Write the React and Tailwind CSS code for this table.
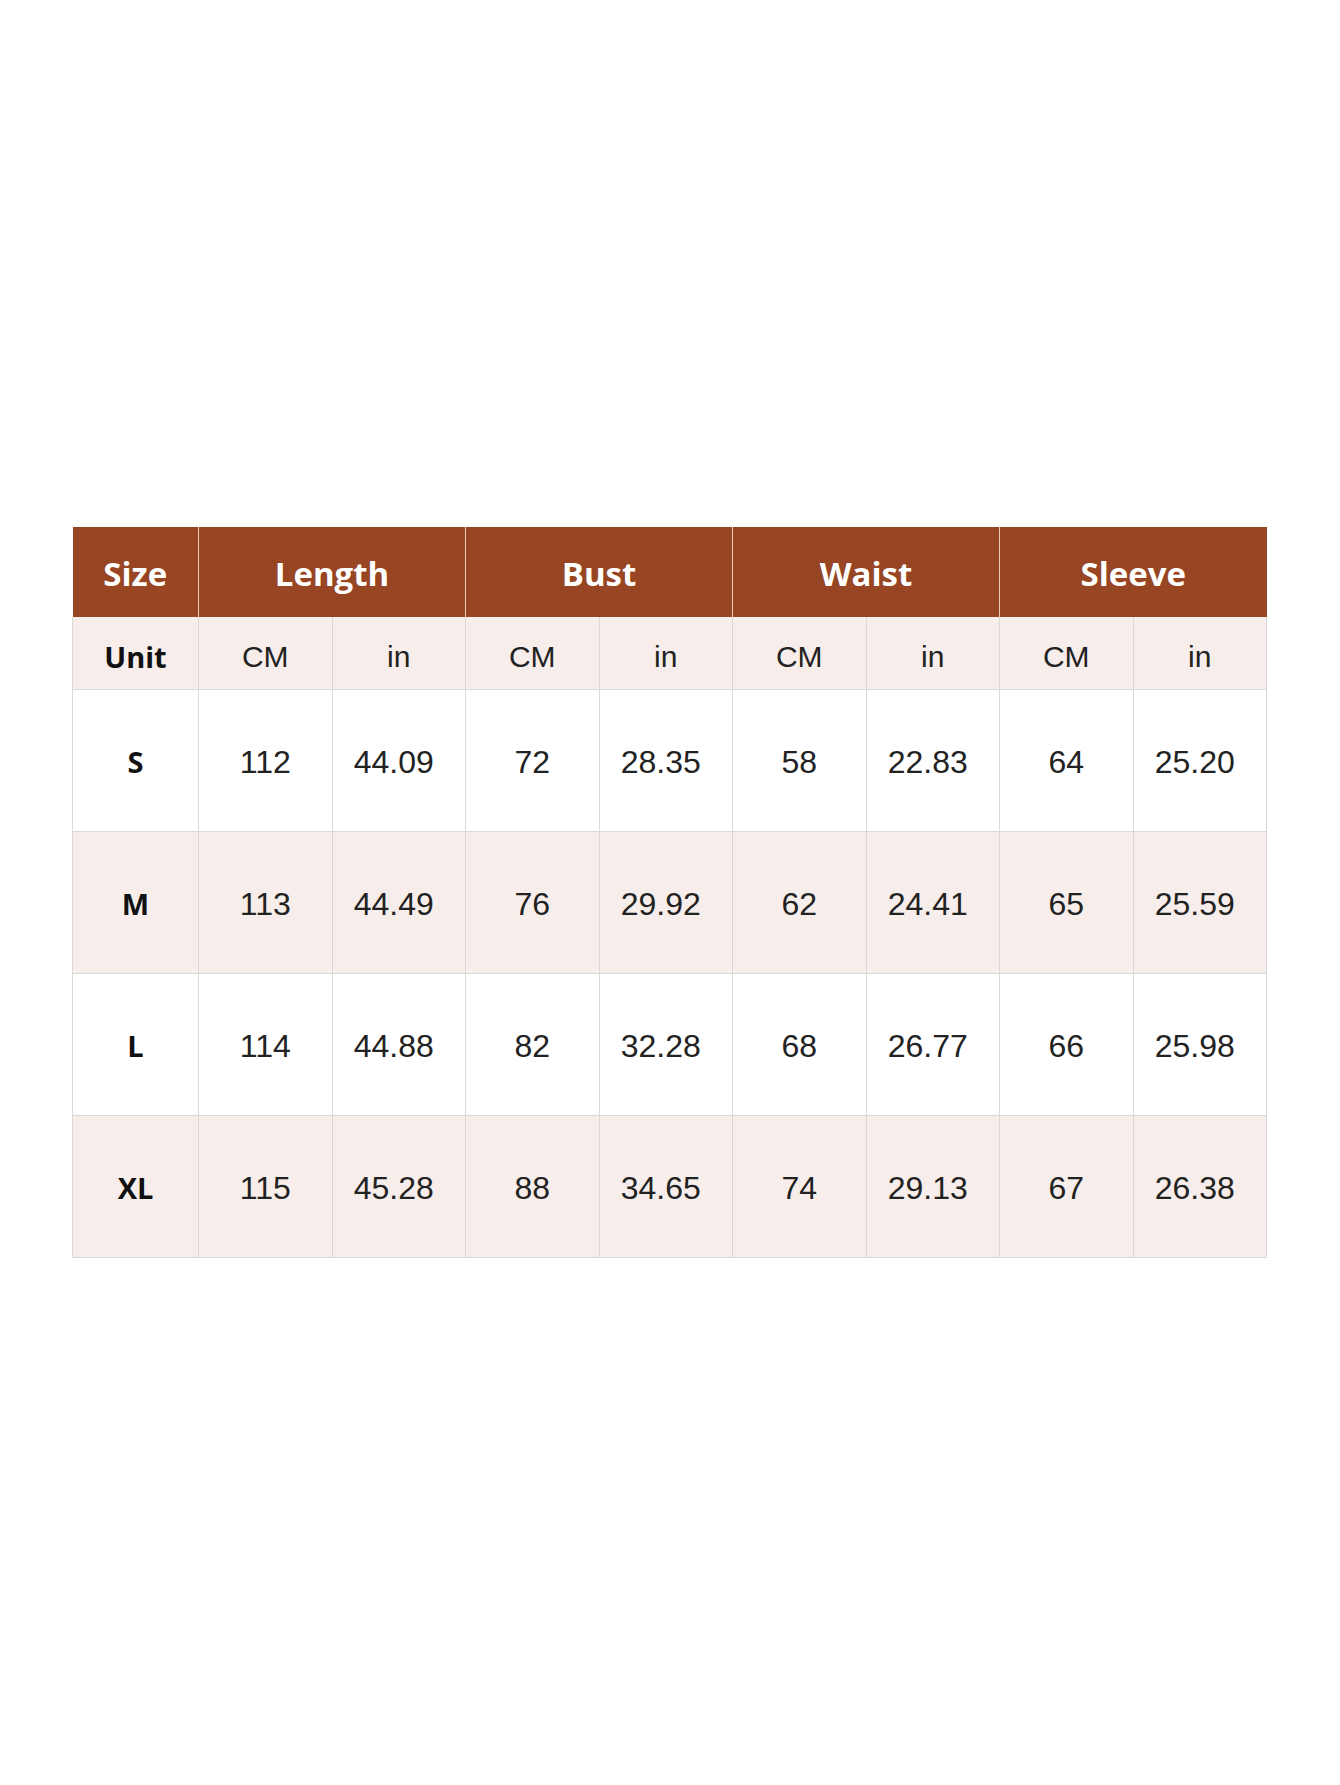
import React from 'react';

const groups = ['Length', 'Bust', 'Waist', 'Sleeve'];

const rows = [
  { size: 'S', vals: ['112', '44.09', '72', '28.35', '58', '22.83', '64', '25.20'] },
  { size: 'M', vals: ['113', '44.49', '76', '29.92', '62', '24.41', '65', '25.59'] },
  { size: 'L', vals: ['114', '44.88', '82', '32.28', '68', '26.77', '66', '25.98'] },
  { size: 'XL', vals: ['115', '45.28', '88', '34.65', '74', '29.13', '67', '26.38'] },
];

const App = () => {
  return (
    <div className="w-[1340px] h-[1785px] bg-white pt-[527px]">
      <table className="ml-[72px] w-[1195px] table-fixed border-collapse text-center font-['Open_Sans',sans-serif]">
        <colgroup>
          <col className="w-[126px]" />
          {Array.from({ length: 8 }).map((_, i) => (
            <col key={i} />
          ))}
        </colgroup>
        <thead>
          <tr className="h-[90px] bg-[#974522] text-white">
            <th className="border-r border-[#e9cbbd] pt-[4px] text-[33px] font-bold">Size</th>
            {groups.map((g, i) => (
              <th
                key={g}
                colSpan={2}
                className={`pt-[4px] text-[33px] font-bold ${i < 3 ? 'border-r border-[#e9cbbd]' : ''}`}
              >
                {g}
              </th>
            ))}
          </tr>
        </thead>
        <tbody>
          <tr className="h-[72px] bg-[#f7eeeb]">
            <td className="border border-[#d9d9d9] border-t-0 pt-[8px] text-[29px] font-bold text-[#111]">Unit</td>
            {groups.map((g) => (
              <React.Fragment key={g}>
                <td className="border border-[#d9d9d9] border-t-0 pt-[8px] font-['Liberation_Sans',sans-serif] text-[30px] text-[#222]">CM</td>
                <td className="border border-[#d9d9d9] border-t-0 pt-[8px] font-['Liberation_Sans',sans-serif] text-[30px] text-[#222]">in</td>
              </React.Fragment>
            ))}
          </tr>
          {rows.map((r, idx) => (
            <tr key={r.size} className={`h-[142px] ${idx % 2 === 1 ? 'bg-[#f7eeeb]' : 'bg-white'}`}>
              <td className="border border-[#d9d9d9] pt-[4px] text-[29px] font-bold text-[#111]">{r.size}</td>
              {r.vals.map((v, i) => (
                <td
                  key={i}
                  className={`border border-[#d9d9d9] pt-[4px] font-['Liberation_Sans',sans-serif] text-[32px] text-[#222] ${i % 2 === 1 ? 'pr-[10px]' : ''}`}
                >
                  {v}
                </td>
              ))}
            </tr>
          ))}
        </tbody>
      </table>
    </div>
  );
};

export default App;
